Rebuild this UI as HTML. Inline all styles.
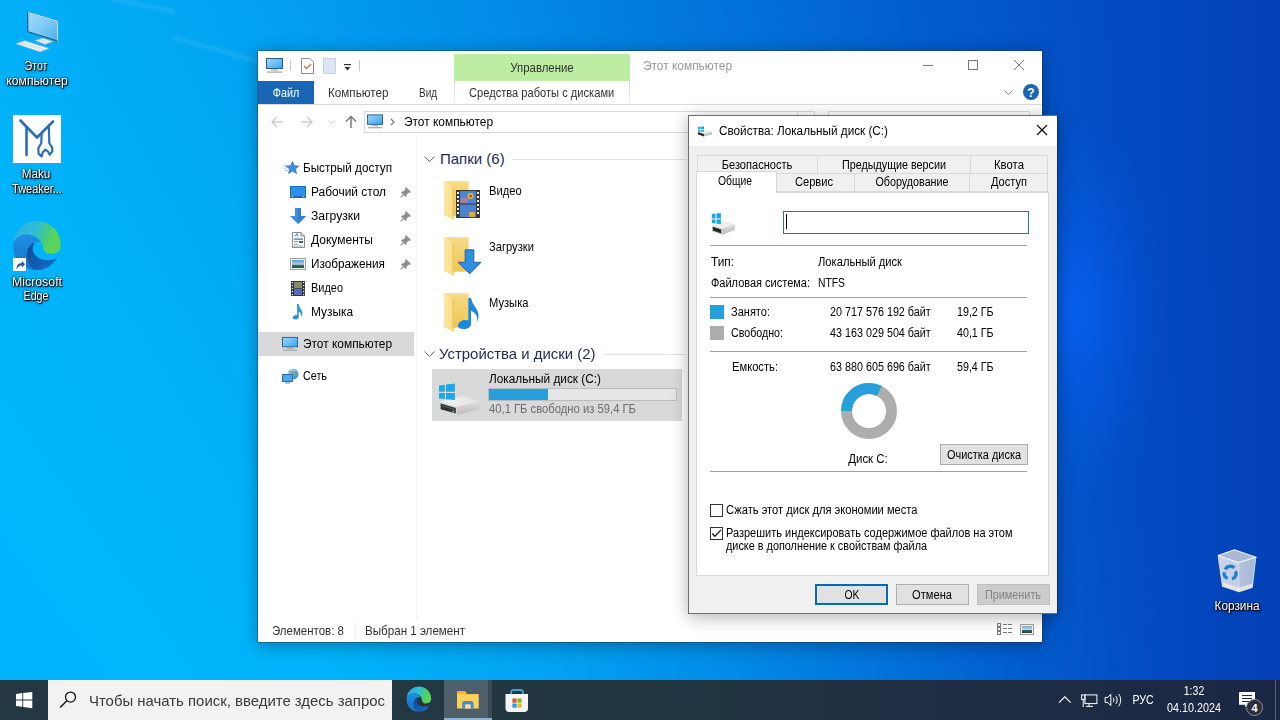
<!DOCTYPE html>
<html><head><meta charset="utf-8"><style>
*{box-sizing:border-box;margin:0;padding:0}
html,body{width:1280px;height:720px;overflow:hidden}
body{position:relative;font-family:"Liberation Sans",sans-serif;font-size:12px;color:#000;
background:conic-gradient(from 300deg at 1250px 2200px,#00b2fd 18.82deg,#00b6fd 24.23deg,#01b2f9 29.65deg,#02a3f2 35.07deg,#028ee8 40.49deg,#0275db 45.91deg,#025dce 51.32deg,#034ac1 56.74deg,#053eb4 62.16deg)}
.a{position:absolute}
.t{position:absolute;white-space:nowrap;line-height:1;font-family:"Liberation Sans",sans-serif}
.dk{text-shadow:0 1px 2px rgba(0,0,0,.9),0 0 3px rgba(0,0,0,.6)}
svg{overflow:visible}

</style></head><body>
<div class="t" style="left:36px;width:0;display:flex;justify-content:center;top:59.64px;transform:scaleX(0.8878);transform-origin:center top;"><span style="font-size:12px;color:#fff;white-space:nowrap;line-height:1;text-shadow:1px 1px 1px #000,0 0 2px #000,0 1px 3px rgba(0,0,0,.8)">Этот</span></div>
<div class="t" style="left:36.5px;width:0;display:flex;justify-content:center;top:74.64px;transform:scaleX(1.0130);transform-origin:center top;"><span style="font-size:12px;color:#fff;white-space:nowrap;line-height:1;text-shadow:1px 1px 1px #000,0 0 2px #000,0 1px 3px rgba(0,0,0,.8)">компьютер</span></div>
<div class="t" style="left:36px;width:0;display:flex;justify-content:center;top:167.84px;transform:scaleX(0.9747);transform-origin:center top;"><span style="font-size:12px;color:#fff;white-space:nowrap;line-height:1;text-shadow:1px 1px 1px #000,0 0 2px #000,0 1px 3px rgba(0,0,0,.8)">Maku</span></div>
<div class="t" style="left:36.7px;width:0;display:flex;justify-content:center;top:182.74px;transform:scaleX(0.9104);transform-origin:center top;"><span style="font-size:12px;color:#fff;white-space:nowrap;line-height:1;text-shadow:1px 1px 1px #000,0 0 2px #000,0 1px 3px rgba(0,0,0,.8)">Tweaker...</span></div>
<div class="t" style="left:36.8px;width:0;display:flex;justify-content:center;top:275.59px;transform:scaleX(1.0270);transform-origin:center top;"><span style="font-size:12px;color:#fff;white-space:nowrap;line-height:1;text-shadow:1px 1px 1px #000,0 0 2px #000,0 1px 3px rgba(0,0,0,.8)">Microsoft</span></div>
<div class="t" style="left:36.4px;width:0;display:flex;justify-content:center;top:290.49px;transform:scaleX(0.8919);transform-origin:center top;"><span style="font-size:12px;color:#fff;white-space:nowrap;line-height:1;text-shadow:1px 1px 1px #000,0 0 2px #000,0 1px 3px rgba(0,0,0,.8)">Edge</span></div>
<div class="t" style="left:1237px;width:0;display:flex;justify-content:center;top:599.84px;transform:scaleX(0.9843);transform-origin:center top;"><span style="font-size:12px;color:#fff;white-space:nowrap;line-height:1;text-shadow:1px 1px 1px #000,0 0 2px #000,0 1px 3px rgba(0,0,0,.8)">Корзина</span></div>
<div class="a" style="left:900px;top:60px;width:380px;height:560px;background:radial-gradient(ellipse 95px 190px at 172px 250px,rgba(10,100,255,.72),rgba(8,98,255,.32) 45%,rgba(8,98,255,0) 100%)"></div>
<svg class="a" style="left:0px;top:0px;" width="300" height="80" viewBox="0 0 300 80"><defs><filter id="sb" x="-20%" y="-50%" width="140%" height="200%"><feGaussianBlur stdDeviation="1.5"/></filter></defs><g stroke="#ffffff" stroke-opacity=".09" stroke-width="4" fill="none" filter="url(#sb)"><line x1="110" y1="-2" x2="175" y2="12"/><line x1="172" y1="37" x2="257" y2="61"/></g></svg>
<div class="a" style="left:0px;top:680px;width:1280px;height:40px;background:linear-gradient(90deg,#243843 0px,#233743 600px,#223542 700px,#213242 800px,#1f2d45 1000px,#1c2944 1160px,#1b2744 1280px)"></div>
<div class="a" style="left:48px;top:680px;width:344px;height:40px;background:#f2f2f2"></div>
<span class="t" id="t7" style="left:89px;top:693.30px;font-size:15px;color:#3a3a3a;transform:scaleX(0.9947);transform-origin:left top;">Чтобы начать поиск, введите здесь запрос</span>
<div class="a" style="left:444px;top:680px;width:48px;height:40px;background:linear-gradient(#4c5f6d,#505d66)"></div>
<div class="a" style="left:488px;top:680px;width:4px;height:40px;background:#3c4852"></div>
<div class="a" style="left:444px;top:718px;width:48px;height:2px;background:#8ab6de"></div>
<div class="t" style="left:1143px;width:0;display:flex;justify-content:center;top:693.84px;transform:scaleX(0.8822);transform-origin:center top;"><span style="font-size:12px;color:#fff;white-space:nowrap;line-height:1;">РУС</span></div>
<div class="t" style="left:1193.7px;width:0;display:flex;justify-content:center;top:684.59px;transform:scaleX(0.8776);transform-origin:center top;"><span style="font-size:12px;color:#fff;white-space:nowrap;line-height:1;">1:32</span></div>
<div class="t" style="left:1194px;width:0;display:flex;justify-content:center;top:702.44px;transform:scaleX(0.8991);transform-origin:center top;"><span style="font-size:12px;color:#fff;white-space:nowrap;line-height:1;">04.10.2024</span></div>
<div class="a" style="left:1275px;top:680px;width:1px;height:40px;background:#5a6270"></div>
<div class="a" style="left:257px;top:50px;width:786px;height:593px;background:#fff;background-clip:padding-box;border:1px solid rgba(40,50,60,.4);box-shadow:0 3px 16px rgba(0,0,0,.3)"></div>
<span class="t" id="t11" style="left:643px;top:59.74px;font-size:12px;color:#999;transform:scaleX(0.9918);transform-origin:left top;">Этот компьютер</span>
<div class="a" style="left:290px;top:60px;width:1px;height:11px;background:#c8c8c8"></div>
<div class="a" style="left:359px;top:60px;width:1px;height:11px;background:#c8c8c8"></div>
<div class="a" style="left:454px;top:54px;width:176px;height:27px;background:#bdeda2"></div>
<div class="t" style="left:542px;width:0;display:flex;justify-content:center;top:62.04px;transform:scaleX(0.9503);transform-origin:center top;"><span style="font-size:12px;color:#333;white-space:nowrap;line-height:1;">Управление</span></div>
<div class="a" style="left:258px;top:81px;width:56px;height:23px;background:#1a66b4"></div>
<div class="t" style="left:286px;width:0;display:flex;justify-content:center;top:86.84px;transform:scaleX(0.8978);transform-origin:center top;"><span style="font-size:12px;color:#fff;white-space:nowrap;line-height:1;">Файл</span></div>
<span class="t" id="t14" style="left:328px;top:86.84px;font-size:12px;color:#333;transform:scaleX(0.9725);transform-origin:left top;">Компьютер</span>
<span class="t" id="t15" style="left:419px;top:86.84px;font-size:12px;color:#333;transform:scaleX(0.8288);transform-origin:left top;">Вид</span>
<div class="a" style="left:454px;top:81px;width:1px;height:23px;background:linear-gradient(#d6d6d6,#f4f4f4)"></div>
<div class="a" style="left:629px;top:81px;width:1px;height:23px;background:linear-gradient(#d6d6d6,#f4f4f4)"></div>
<span class="t" id="t16" style="left:469px;top:86.84px;font-size:12px;color:#333;transform:scaleX(0.9265);transform-origin:left top;">Средства работы с дисками</span>
<div class="a" style="left:258px;top:104px;width:784px;height:1px;background:#dadbdc"></div>
<div class="a" style="left:364px;top:111px;width:434px;height:22px;border:1px solid #d9d9d9;background:#fff"></div>
<div class="a" style="left:798px;top:111px;width:17px;height:22px;border:1px solid #d9d9d9;border-left:none"></div>
<div class="a" style="left:828px;top:111px;width:202px;height:22px;border:1px solid #d9d9d9"></div>
<span class="t" id="t17" style="left:404px;top:115.84px;font-size:12px;color:#000;transform:scaleX(0.9918);transform-origin:left top;">Этот компьютер</span>
<div class="a" style="left:416px;top:134px;width:1px;height:486px;background:#f2f2f2"></div>
<span class="t" id="t18" style="left:303.4px;top:161.84px;font-size:12px;color:#000;transform:scaleX(0.9765);transform-origin:left top;">Быстрый доступ</span>
<span class="t" id="t19" style="left:311px;top:185.84px;font-size:12px;color:#000;transform:scaleX(0.9956);transform-origin:left top;">Рабочий стол</span>
<span class="t" id="t20" style="left:311px;top:209.84px;font-size:12px;color:#000;transform:scaleX(1.0146);transform-origin:left top;">Загрузки</span>
<span class="t" id="t21" style="left:311px;top:233.84px;font-size:12px;color:#000;transform:scaleX(1.0023);transform-origin:left top;">Документы</span>
<span class="t" id="t22" style="left:311px;top:257.84px;font-size:12px;color:#000;transform:scaleX(0.9811);transform-origin:left top;">Изображения</span>
<span class="t" id="t23" style="left:311px;top:281.84px;font-size:12px;color:#000;transform:scaleX(0.9127);transform-origin:left top;">Видео</span>
<span class="t" id="t24" style="left:311px;top:305.84px;font-size:12px;color:#000;transform:scaleX(0.9893);transform-origin:left top;">Музыка</span>
<div class="a" style="left:258px;top:332px;width:156px;height:24px;background:#d9d9d9"></div>
<span class="t" id="t25" style="left:303.4px;top:337.84px;font-size:12px;color:#000;transform:scaleX(0.9918);transform-origin:left top;">Этот компьютер</span>
<span class="t" id="t26" style="left:303.4px;top:369.84px;font-size:12px;color:#000;transform:scaleX(0.8988);transform-origin:left top;">Сеть</span>
<span class="t" id="t27" style="left:440px;top:151.00px;font-size:15px;color:#1f2a55;">Папки (6)</span>
<div class="a" style="left:512px;top:159px;width:174px;height:1px;background:#e2e2e2"></div>
<span class="t" id="t28" style="left:489.4px;top:185.14px;font-size:12px;color:#000;transform:scaleX(0.9300);transform-origin:left top;">Видео</span>
<span class="t" id="t29" style="left:489.4px;top:241.14px;font-size:12px;color:#000;transform:scaleX(0.9300);transform-origin:left top;">Загрузки</span>
<span class="t" id="t30" style="left:489.4px;top:297.14px;font-size:12px;color:#000;transform:scaleX(0.9300);transform-origin:left top;">Музыка</span>
<span class="t" id="t31" style="left:439px;top:346.10px;font-size:15px;color:#1f2a55;transform:scaleX(0.9951);transform-origin:left top;">Устройства и диски (2)</span>
<div class="a" style="left:603px;top:354px;width:83px;height:1px;background:#e2e2e2"></div>
<svg class="a" style="left:424px;top:156px;" width="11" height="6" viewBox="0 0 11 6"><polyline points="0.5,0.5 5.5,5.5 10.5,0.5" fill="none" stroke="#666" stroke-width="1"/></svg>
<svg class="a" style="left:424px;top:351px;" width="11" height="6" viewBox="0 0 11 6"><polyline points="0.5,0.5 5.5,5.5 10.5,0.5" fill="none" stroke="#666" stroke-width="1"/></svg>
<div class="a" style="left:432px;top:369px;width:250px;height:52px;background:#d9d9d9"></div>
<span class="t" id="t32" style="left:489px;top:372.64px;font-size:12px;color:#000;transform:scaleX(0.9862);transform-origin:left top;">Локальный диск (C:)</span>
<div class="a" style="left:488px;top:388px;width:189px;height:13px;background:#e6e6e6;border:1px solid #bcbcbc"></div>
<div class="a" style="left:489px;top:389px;width:59px;height:11px;background:#26a0da"></div>
<span class="t" id="t33" style="left:489px;top:403.24px;font-size:12px;color:#6d6d6d;transform:scaleX(0.9372);transform-origin:left top;">40,1 ГБ свободно из 59,4 ГБ</span>
<span class="t" id="t34" style="left:272.2px;top:624.84px;font-size:12px;color:#333;transform:scaleX(0.9572);transform-origin:left top;">Элементов: 8</span>
<div class="a" style="left:355px;top:622px;width:1px;height:18px;background:#f0f0f0"></div>
<span class="t" id="t35" style="left:365px;top:624.84px;font-size:12px;color:#333;transform:scaleX(0.9671);transform-origin:left top;">Выбран 1 элемент</span>
<div class="a" style="left:688px;top:115px;width:370px;height:499px;background:#f0f0f0;background-clip:padding-box;border:1px solid #6f6f6f;border-right-color:rgba(10,30,70,.5);box-shadow:0 3px 16px rgba(0,0,0,.3)"></div>
<div class="a" style="left:689px;top:116px;width:368px;height:30px;background:#fff"></div>
<span class="t" id="t36" style="left:718.75px;top:124.84px;font-size:12px;color:#000;transform:scaleX(0.9773);transform-origin:left top;">Свойства: Локальный диск (C:)</span>
<div class="a" style="left:696px;top:192px;width:353px;height:384px;background:#fff;border:1px solid #d9d9d9"></div>
<div class="a" style="left:697px;top:155px;width:121px;height:19px;background:#f0f0f0;border:1px solid #d9d9d9;"></div>
<div class="a" style="left:817px;top:155px;width:154px;height:19px;background:#f0f0f0;border:1px solid #d9d9d9;"></div>
<div class="a" style="left:970px;top:155px;width:78px;height:19px;background:#f0f0f0;border:1px solid #d9d9d9;"></div>
<div class="a" style="left:776px;top:173px;width:79px;height:19px;background:#f0f0f0;border:1px solid #d9d9d9;"></div>
<div class="a" style="left:854px;top:173px;width:116px;height:19px;background:#f0f0f0;border:1px solid #d9d9d9;"></div>
<div class="a" style="left:969px;top:173px;width:79px;height:19px;background:#f0f0f0;border:1px solid #d9d9d9;"></div>
<div class="a" style="left:696px;top:171px;width:81px;height:22px;background:#fff;border:1px solid #d9d9d9;border-bottom:none"></div>
<div class="t" style="left:757px;width:0;display:flex;justify-content:center;top:158.59px;transform:scaleX(0.9210);transform-origin:center top;"><span style="font-size:12px;color:#000;white-space:nowrap;line-height:1;">Безопасность</span></div>
<div class="t" style="left:894px;width:0;display:flex;justify-content:center;top:158.59px;transform:scaleX(0.8972);transform-origin:center top;"><span style="font-size:12px;color:#000;white-space:nowrap;line-height:1;">Предыдущие версии</span></div>
<div class="t" style="left:1009px;width:0;display:flex;justify-content:center;top:158.59px;transform:scaleX(0.9467);transform-origin:center top;"><span style="font-size:12px;color:#000;white-space:nowrap;line-height:1;">Квота</span></div>
<div class="t" style="left:735px;width:0;display:flex;justify-content:center;top:174.84px;transform:scaleX(0.8614);transform-origin:center top;"><span style="font-size:12px;color:#000;white-space:nowrap;line-height:1;">Общие</span></div>
<div class="t" style="left:814px;width:0;display:flex;justify-content:center;top:176.34px;transform:scaleX(0.9247);transform-origin:center top;"><span style="font-size:12px;color:#000;white-space:nowrap;line-height:1;">Сервис</span></div>
<div class="t" style="left:911.5px;width:0;display:flex;justify-content:center;top:176.34px;transform:scaleX(0.8943);transform-origin:center top;"><span style="font-size:12px;color:#000;white-space:nowrap;line-height:1;">Оборудование</span></div>
<div class="t" style="left:1008.5px;width:0;display:flex;justify-content:center;top:176.34px;transform:scaleX(0.9212);transform-origin:center top;"><span style="font-size:12px;color:#000;white-space:nowrap;line-height:1;">Доступ</span></div>
<div class="a" style="left:783px;top:211px;width:246px;height:23px;border:1px solid #2b7590;background:#fff"></div>
<div class="a" style="left:786px;top:214px;width:1px;height:15px;background:#000"></div>
<div class="a" style="left:710px;top:245px;width:317px;height:1px;background:#a0a0a0"></div>
<span class="t" id="t44" style="left:711px;top:255.64px;font-size:12px;color:#000;transform:scaleX(0.9853);transform-origin:left top;">Тип:</span>
<span class="t" id="t45" style="left:818px;top:255.64px;font-size:12px;color:#000;transform:scaleX(0.9309);transform-origin:left top;">Локальный диск</span>
<span class="t" id="t46" style="left:711px;top:276.54px;font-size:12px;color:#000;transform:scaleX(0.9161);transform-origin:left top;">Файловая система:</span>
<span class="t" id="t47" style="left:818px;top:276.54px;font-size:12px;color:#000;transform:scaleX(0.8614);transform-origin:left top;">NTFS</span>
<div class="a" style="left:710px;top:297px;width:317px;height:1px;background:#a0a0a0"></div>
<div class="a" style="left:710px;top:305px;width:14px;height:14px;background:#26a0da"></div>
<div class="a" style="left:710px;top:326px;width:14px;height:14px;background:#adadad"></div>
<span class="t" id="t48" style="left:731px;top:305.84px;font-size:12px;color:#000;transform:scaleX(0.9193);transform-origin:left top;">Занято:</span>
<span class="t" id="t49" style="left:731px;top:326.84px;font-size:12px;color:#000;transform:scaleX(0.8889);transform-origin:left top;">Свободно:</span>
<span class="t" id="t50" style="left:830px;top:305.84px;font-size:12px;color:#000;transform:scaleX(0.8974);transform-origin:left top;">20 717 576 192 байт</span>
<span class="t" id="t51" style="left:830px;top:326.84px;font-size:12px;color:#000;transform:scaleX(0.8974);transform-origin:left top;">43 163 029 504 байт</span>
<span class="t" id="t52" style="left:957px;top:305.84px;font-size:12px;color:#000;transform:scaleX(0.8913);transform-origin:left top;">19,2 ГБ</span>
<span class="t" id="t53" style="left:957px;top:326.84px;font-size:12px;color:#000;transform:scaleX(0.8913);transform-origin:left top;">40,1 ГБ</span>
<div class="a" style="left:710px;top:351px;width:317px;height:1px;background:#a0a0a0"></div>
<span class="t" id="t54" style="left:731.5px;top:360.84px;font-size:12px;color:#000;transform:scaleX(0.9311);transform-origin:left top;">Емкость:</span>
<span class="t" id="t55" style="left:830px;top:360.84px;font-size:12px;color:#000;transform:scaleX(0.8974);transform-origin:left top;">63 880 605 696 байт</span>
<span class="t" id="t56" style="left:957px;top:360.84px;font-size:12px;color:#000;transform:scaleX(0.8913);transform-origin:left top;">59,4 ГБ</span>
<div class="t" style="left:867.8px;width:0;display:flex;justify-content:center;top:453.44px;transform:scaleX(0.9560);transform-origin:center top;"><span style="font-size:12px;color:#000;white-space:nowrap;line-height:1;">Диск C:</span></div>
<div class="a" style="left:940px;top:444px;width:88px;height:21px;background:#e1e1e1;border:1px solid #adadad"></div>
<div class="t" style="left:983.5px;width:0;display:flex;justify-content:center;top:448.84px;transform:scaleX(0.9113);transform-origin:center top;"><span style="font-size:12px;color:#000;white-space:nowrap;line-height:1;">Очистка диска</span></div>
<div class="a" style="left:710px;top:471px;width:317px;height:1px;background:#a0a0a0"></div>
<div class="a" style="left:710px;top:504px;width:13px;height:13px;background:#fff;border:1px solid #333"></div>
<div class="a" style="left:710px;top:527px;width:13px;height:13px;background:#fff;border:1px solid #333"></div>
<span class="t" id="t59" style="left:726px;top:504.34px;font-size:12px;color:#000;transform:scaleX(0.9275);transform-origin:left top;">Сжать этот диск для экономии места</span>
<span class="t" id="t60" style="left:726px;top:527.34px;font-size:12px;color:#000;transform:scaleX(0.9163);transform-origin:left top;">Разрешить индексировать содержимое файлов на этом</span>
<span class="t" id="t61" style="left:726px;top:539.84px;font-size:12px;color:#000;transform:scaleX(0.9048);transform-origin:left top;">диске в дополнение к свойствам файла</span>
<div class="a" style="left:815px;top:584px;width:73px;height:21px;background:#e1e1e1;border:2px solid #1565a8;box-shadow:inset 0 0 0 1px #cfe8f8"></div>
<div class="t" style="left:851.5px;width:0;display:flex;justify-content:center;top:589.34px;transform:scaleX(0.8649);transform-origin:center top;"><span style="font-size:12px;color:#000;white-space:nowrap;line-height:1;">OK</span></div>
<div class="a" style="left:896px;top:584px;width:73px;height:21px;background:#e1e1e1;border:1px solid #adadad"></div>
<div class="t" style="left:932px;width:0;display:flex;justify-content:center;top:589.34px;transform:scaleX(0.9289);transform-origin:center top;"><span style="font-size:12px;color:#000;white-space:nowrap;line-height:1;">Отмена</span></div>
<div class="a" style="left:977px;top:584px;width:73px;height:21px;background:#cccccc;border:1px solid #bfbfbf"></div>
<div class="t" style="left:1013px;width:0;display:flex;justify-content:center;top:589.34px;transform:scaleX(0.9030);transform-origin:center top;"><span style="font-size:12px;color:#838383;white-space:nowrap;line-height:1;">Применить</span></div>
<svg class="a" style="left:444px;top:181px;" width="26" height="40" viewBox="0 0 26 40">
<defs><linearGradient id="fb" x1="0" y1="0" x2="0" y2="1"><stop offset="0" stop-color="#f7da86"/><stop offset="1" stop-color="#f0c650"/></linearGradient>
<linearGradient id="ff" x1="0" y1="0" x2="1" y2="0"><stop offset="0" stop-color="#fde9a8"/><stop offset="1" stop-color="#f9dc83"/></linearGradient></defs>
<rect x="0" y="0" width="24.6" height="34.7" fill="url(#fb)"/>
<rect x="0" y="0" width="24.6" height="1.2" fill="#f9e3a4"/>
<polygon points="0,0 8.7,5.3 8.7,39 0,33.8" fill="url(#ff)"/>
<polygon points="8.7,5.3 9.7,5.8 9.7,38.5 8.7,39" fill="#e9c261"/>
</svg>
<svg class="a" style="left:444px;top:237px;" width="26" height="40" viewBox="0 0 26 40">
<defs><linearGradient id="fb" x1="0" y1="0" x2="0" y2="1"><stop offset="0" stop-color="#f7da86"/><stop offset="1" stop-color="#f0c650"/></linearGradient>
<linearGradient id="ff" x1="0" y1="0" x2="1" y2="0"><stop offset="0" stop-color="#fde9a8"/><stop offset="1" stop-color="#f9dc83"/></linearGradient></defs>
<rect x="0" y="0" width="24.6" height="34.7" fill="url(#fb)"/>
<rect x="0" y="0" width="24.6" height="1.2" fill="#f9e3a4"/>
<polygon points="0,0 8.7,5.3 8.7,39 0,33.8" fill="url(#ff)"/>
<polygon points="8.7,5.3 9.7,5.8 9.7,38.5 8.7,39" fill="#e9c261"/>
</svg>
<svg class="a" style="left:444px;top:293px;" width="26" height="40" viewBox="0 0 26 40">
<defs><linearGradient id="fb" x1="0" y1="0" x2="0" y2="1"><stop offset="0" stop-color="#f7da86"/><stop offset="1" stop-color="#f0c650"/></linearGradient>
<linearGradient id="ff" x1="0" y1="0" x2="1" y2="0"><stop offset="0" stop-color="#fde9a8"/><stop offset="1" stop-color="#f9dc83"/></linearGradient></defs>
<rect x="0" y="0" width="24.6" height="34.7" fill="url(#fb)"/>
<rect x="0" y="0" width="24.6" height="1.2" fill="#f9e3a4"/>
<polygon points="0,0 8.7,5.3 8.7,39 0,33.8" fill="url(#ff)"/>
<polygon points="8.7,5.3 9.7,5.8 9.7,38.5 8.7,39" fill="#e9c261"/>
</svg>
<svg class="a" style="left:456px;top:190px;" width="24" height="28" viewBox="0 0 24 28">
<rect x="0" y="0" width="24" height="28" fill="#3a3a32"/>
<rect x="4" y="1" width="16" height="12.5" fill="#4d84d8"/>
<rect x="4" y="14.5" width="16" height="12.5" fill="#4a80d6"/>
<rect x="5" y="8" width="7" height="5" fill="#c77a8a" opacity=".8"/>
<circle cx="14.5" cy="6" r="3" fill="#e0c030"/>
<circle cx="14.5" cy="6" r="1.6" fill="#d84a2a"/>
<rect x="13" y="22" width="6" height="5" fill="#d8b030"/>
<g fill="#f2f2f2">
<rect x="1" y="2" width="2" height="2"/><rect x="1" y="6" width="2" height="2"/><rect x="1" y="10" width="2" height="2"/><rect x="1" y="14" width="2" height="2"/><rect x="1" y="18" width="2" height="2"/><rect x="1" y="22" width="2" height="2"/>
<rect x="21" y="2" width="2" height="2"/><rect x="21" y="6" width="2" height="2"/><rect x="21" y="10" width="2" height="2"/><rect x="21" y="14" width="2" height="2"/><rect x="21" y="18" width="2" height="2"/><rect x="21" y="22" width="2" height="2"/>
</g></svg>
<svg class="a" style="left:457px;top:249px;" width="25" height="26" viewBox="0 0 25 26"><polygon points="8.2,0.8 16.8,0.8 16.8,13.3 24,13.3 12.7,24.8 1,13.3 8.2,13.3" fill="#2f8de2" stroke="#1f5fae" stroke-width="1"/></svg>
<svg class="a" style="left:456px;top:297px;" width="24" height="32" viewBox="0 0 24 32">
<path d="M12.3,1 L15,1 C15.5,5 18,8 20.5,12 C23,16 23,20 21.5,24 L20.8,23.6 C21.6,20 20.5,16.5 15,13.5 L15,27 C15,30 11.5,32 8,32 C4,32 1.5,30.5 2,28 C2.5,25 6,23 9.5,23 C10.5,23 11.5,23.2 12.3,23.6 Z" fill="#1a88e0"/></svg>
<svg class="a" style="left:436px;top:380px;" width="48.0" height="40.0" preserveAspectRatio="none" viewBox="0 0 48 40">
<defs><linearGradient id="dtop" x1="0" y1="0" x2="1" y2="0"><stop offset="0" stop-color="#f4f4f4"/><stop offset="1" stop-color="#e2e2e2"/></linearGradient>
<linearGradient id="dside" x1="0" y1="0" x2="0" y2="1"><stop offset="0" stop-color="#dedede"/><stop offset="1" stop-color="#bdbdbd"/></linearGradient></defs>
<polygon points="3.3,21.8 26.9,16.2 44.6,21.2 20.8,26.9" fill="url(#dtop)"/>
<polygon points="20.8,26.9 44.6,21.2 44.6,29 20.8,35.2" fill="url(#dside)"/>
<polygon points="3.3,21.8 20.8,26.9 20.8,35.2 3.3,30.5" fill="#d8d8d8"/>
<polygon points="4.6,23.6 19.8,28.1 19.8,33.6 4.6,29.2" fill="#303233"/>
<polygon points="6,25 18.5,28.8 18.5,30 6,26.3" fill="#555a5c"/>
<circle cx="17.4" cy="31.4" r="1" fill="#5fd08a"/>
<g fill="#19a9e6">
<polygon points="3,5.6 8.9,4.8 8.9,11.7 3,11.7"/>
<polygon points="10,4.6 18.9,3.6 18.9,11.7 10,11.7"/>
<polygon points="3,13 8.9,13 8.9,19 3,18.4"/>
<polygon points="10,13 18.9,13 18.9,20 10,19.2"/>
</g></svg>
<svg class="a" style="left:284px;top:161px;" width="15" height="14" viewBox="0 0 15 14">
<polygon points="8.5,0.5 10.3,4.8 14.8,5.1 11.4,8 12.5,12.5 8.5,10 4.6,12.5 5.6,8 2.2,5.1 6.7,4.8" fill="#3a8fe6" stroke="#2466b8" stroke-width=".7"/>
<g stroke="#8cc0f0" stroke-width="1"><line x1="0" y1="7" x2="3" y2="7"/><line x1="1" y1="9.5" x2="4" y2="9.5"/><line x1="0.5" y1="4.5" x2="3" y2="4.5"/></g></svg>
<svg class="a" style="left:290px;top:186px;" width="16" height="12" viewBox="0 0 16 12"><rect x="0.5" y="0.5" width="15" height="11" fill="#2f90ea" stroke="#1c6bc2"/><g fill="#fff"><rect x="2" y="10" width="1" height="1"/><rect x="13" y="10" width="1" height="1"/></g><rect x="4" y="10" width="8" height="1" fill="#1c6bc2"/></svg>
<svg class="a" style="left:290px;top:208px;" width="16" height="16" viewBox="0 0 16 16"><polygon points="5,0 11,0 11,8 16,8 8,16 0,8 5,8" fill="#3b8fe2"/><polygon points="8,0 11,0 11,8 16,8 8,16" fill="#2f7fd6"/></svg>
<svg class="a" style="left:292px;top:232px;" width="13" height="16" viewBox="0 0 13 16"><path d="M0.5,0.5 H9 L12.5,4 V15.5 H0.5 Z" fill="#fff" stroke="#8c8c8c"/><path d="M9,0.5 V4 H12.5" fill="none" stroke="#8c8c8c"/>
<rect x="2" y="6.5" width="9" height="1.2" fill="#2a7ab8"/><rect x="2" y="9" width="4" height="1" fill="#7a9ab8"/><rect x="7" y="9" width="4" height="2" fill="#3a5a78"/><rect x="2" y="11.5" width="4" height="1" fill="#7a9ab8"/><rect x="2" y="13.5" width="9" height="1" fill="#9aaabb"/><path d="M3,4.5 L5,1.5 L6,4.5" stroke="#2a7ab8" fill="none" stroke-width=".9"/></svg>
<svg class="a" style="left:290px;top:258px;" width="16" height="12" viewBox="0 0 16 12"><defs><linearGradient id="pg" x1="0" y1="0" x2="0" y2="1"><stop offset="0" stop-color="#5a9ad0"/><stop offset=".55" stop-color="#b8d0e0"/><stop offset=".6" stop-color="#3a7068"/><stop offset="1" stop-color="#20504a"/></linearGradient></defs>
<rect x="0.5" y="0.5" width="15" height="11" fill="#f4f4f4" stroke="#a0a0a0"/><rect x="2" y="2" width="12" height="8" fill="url(#pg)"/></svg>
<svg class="a" style="left:291px;top:281px;" width="14" height="15" viewBox="0 0 14 15"><rect x="0" y="0" width="14" height="15" fill="#2e3440"/><rect x="3" y="1" width="8" height="6.2" fill="#8a8a60"/><rect x="3" y="7.8" width="8" height="6.2" fill="#5a6ab8"/>
<g fill="#e8e8e0"><rect x="0.8" y="1" width="1.2" height="1.2"/><rect x="0.8" y="4" width="1.2" height="1.2"/><rect x="0.8" y="7" width="1.2" height="1.2"/><rect x="0.8" y="10" width="1.2" height="1.2"/><rect x="0.8" y="13" width="1.2" height="1.2"/>
<rect x="12" y="1" width="1.2" height="1.2"/><rect x="12" y="4" width="1.2" height="1.2"/><rect x="12" y="7" width="1.2" height="1.2"/><rect x="12" y="10" width="1.2" height="1.2"/><rect x="12" y="13" width="1.2" height="1.2"/></g></svg>
<svg class="a" style="left:290px;top:303.5px;" width="13.5" height="15.5" viewBox="0 0 12 14"><path d="M6.3,0 L7.8,0 C8,2.5 9.5,4 10.5,6 C11.5,8 11.2,10 10.5,11.2 L10,11 C10.3,9.5 9.8,8 7.8,6.8 L7.8,12 C7.8,13.2 6.5,14 5,14 C3.2,14 2.2,13.3 2.4,12.2 C2.7,10.8 4.2,10 5.4,10 C5.8,10 6.1,10.1 6.3,10.2 Z" fill="#2a90e0"/></svg>
<svg class="a" style="left:400px;top:186px;" width="12" height="12" viewBox="0 0 12 12"><g fill="#8c8c8c"><polygon points="6,1 11,6 9.6,7 8.6,6.6 6.2,9 6.6,10.2 5.6,11 1,6.4 1.8,5.4 3,5.8 5.4,3.4 5,2.4"/><polygon points="3.2,8 4,8.8 1,11.8 0.2,11"/></g></svg>
<svg class="a" style="left:400px;top:210px;" width="12" height="12" viewBox="0 0 12 12"><g fill="#8c8c8c"><polygon points="6,1 11,6 9.6,7 8.6,6.6 6.2,9 6.6,10.2 5.6,11 1,6.4 1.8,5.4 3,5.8 5.4,3.4 5,2.4"/><polygon points="3.2,8 4,8.8 1,11.8 0.2,11"/></g></svg>
<svg class="a" style="left:400px;top:234px;" width="12" height="12" viewBox="0 0 12 12"><g fill="#8c8c8c"><polygon points="6,1 11,6 9.6,7 8.6,6.6 6.2,9 6.6,10.2 5.6,11 1,6.4 1.8,5.4 3,5.8 5.4,3.4 5,2.4"/><polygon points="3.2,8 4,8.8 1,11.8 0.2,11"/></g></svg>
<svg class="a" style="left:400px;top:258px;" width="12" height="12" viewBox="0 0 12 12"><g fill="#8c8c8c"><polygon points="6,1 11,6 9.6,7 8.6,6.6 6.2,9 6.6,10.2 5.6,11 1,6.4 1.8,5.4 3,5.8 5.4,3.4 5,2.4"/><polygon points="3.2,8 4,8.8 1,11.8 0.2,11"/></g></svg>
<svg class="a" style="left:282px;top:336px;" width="16" height="16" viewBox="0 0 17 15">
<defs><linearGradient id="mg" x1="0" y1="0" x2="1" y2="1"><stop offset="0" stop-color="#9fd8fb"/><stop offset="1" stop-color="#3aa3ee"/></linearGradient></defs>
<rect x="0.5" y="0.5" width="16" height="10" fill="url(#mg)" stroke="#2a5e8c" stroke-width="1"/>
<rect x="5" y="11.5" width="7" height="1" fill="#8a9aa8"/>
<rect x="1" y="13.5" width="15" height="1.2" fill="#9aa5ae"/>
</svg>
<svg class="a" style="left:282px;top:367.5px;" width="17" height="16" viewBox="0 0 17 16"><defs><linearGradient id="gl" x1="0" y1="0" x2="1" y2="1"><stop offset="0" stop-color="#bfe6fb"/><stop offset="1" stop-color="#2f7fc8"/></linearGradient></defs>
<circle cx="11" cy="6" r="5.5" fill="url(#gl)"/><path d="M7,3 C9,5 12,4 15,6 M9,9 C10,7 13,8 14,10" stroke="#5a9a60" stroke-width="1" fill="none"/>
<rect x="0.5" y="6.5" width="10" height="7" fill="#4aa8f0" stroke="#2a6aa8"/><rect x="3" y="14.5" width="5" height="1" fill="#6a8aa8"/></svg>
<svg class="a" style="left:367px;top:114px;" width="16" height="15" viewBox="0 0 17 15">
<defs><linearGradient id="mg" x1="0" y1="0" x2="1" y2="1"><stop offset="0" stop-color="#9fd8fb"/><stop offset="1" stop-color="#3aa3ee"/></linearGradient></defs>
<rect x="0.5" y="0.5" width="16" height="10" fill="url(#mg)" stroke="#2a5e8c" stroke-width="1"/>
<rect x="5" y="11.5" width="7" height="1" fill="#8a9aa8"/>
<rect x="1" y="13.5" width="15" height="1.2" fill="#9aa5ae"/>
</svg>
<svg class="a" style="left:390px;top:118px;" width="5" height="8" viewBox="0 0 5 8"><polyline points="1,1 4,4 1,7" fill="none" stroke="#777" stroke-width="1.2"/></svg>
<svg class="a" style="left:271px;top:116px;" width="13" height="12" viewBox="0 0 13 12"><g fill="none" stroke="#c8c8c8" stroke-width="1.3"><line x1="1" y1="6" x2="12" y2="6"/><polyline points="6,1 1,6 6,11"/></g></svg>
<svg class="a" style="left:300px;top:116px;" width="13" height="12" viewBox="0 0 13 12"><g fill="none" stroke="#c8c8c8" stroke-width="1.3"><line x1="1" y1="6" x2="12" y2="6"/><polyline points="7,1 12,6 7,11"/></g></svg>
<svg class="a" style="left:328px;top:120px;" width="7" height="5" viewBox="0 0 7 5"><polyline points="0.5,0.8 3.5,3.8 6.5,0.8" fill="none" stroke="#c8c8c8" stroke-width="1"/></svg>
<svg class="a" style="left:345px;top:115px;" width="12" height="13" viewBox="0 0 12 13"><g fill="none" stroke="#777" stroke-width="1.5"><line x1="6" y1="1.5" x2="6" y2="13"/><polyline points="1,6.5 6,1.5 11,6.5"/></g></svg>
<svg class="a" style="left:266px;top:58px;" width="17" height="15" viewBox="0 0 17 15">
<defs><linearGradient id="mg" x1="0" y1="0" x2="1" y2="1"><stop offset="0" stop-color="#9fd8fb"/><stop offset="1" stop-color="#3aa3ee"/></linearGradient></defs>
<rect x="0.5" y="0.5" width="16" height="10" fill="url(#mg)" stroke="#2a5e8c" stroke-width="1"/>
<rect x="5" y="11.5" width="7" height="1" fill="#8a9aa8"/>
<rect x="1" y="13.5" width="15" height="1.2" fill="#9aa5ae"/>
</svg>
<svg class="a" style="left:301px;top:58px;" width="13" height="16" viewBox="0 0 13 16"><path d="M0.5,0.5 H9 L12.5,4 V15.5 H0.5 Z" fill="#fff" stroke="#8a8a8a"/><polyline points="3,8 5.5,10.5 10,6" fill="none" stroke="#e07030" stroke-width="1.3"/></svg>
<svg class="a" style="left:323px;top:58px;" width="13" height="16" viewBox="0 0 13 16"><rect x="0.5" y="0.5" width="12" height="15" fill="#dde6f2" stroke="#c6d2e2"/></svg>
<svg class="a" style="left:344px;top:64px;" width="7" height="7" viewBox="0 0 7 7"><rect x="0" y="0" width="7" height="1.2" fill="#333"/><polygon points="0.5,3 6.5,3 3.5,6.5" fill="#333"/></svg>
<div class="a" style="left:923px;top:65px;width:10px;height:1px;background:#777"></div>
<div class="a" style="left:968px;top:60px;width:10px;height:10px;border:1px solid #777"></div>
<svg class="a" style="left:1014px;top:60px;" width="10" height="10" viewBox="0 0 10 10"><g stroke="#777" stroke-width="1"><line x1="0" y1="0" x2="10" y2="10"/><line x1="10" y1="0" x2="0" y2="10"/></g></svg>
<svg class="a" style="left:1004px;top:90px;" width="9" height="5" viewBox="0 0 9 5"><polyline points="0.5,0.5 4.5,4.5 8.5,0.5" fill="none" stroke="#888" stroke-width="1"/></svg>
<svg class="a" style="left:1023px;top:84px;" width="16" height="16" viewBox="0 0 16 16"><circle cx="8" cy="8" r="8" fill="#1a66b4"/><text x="8" y="13" font-family="Liberation Sans" font-weight="bold" font-size="12" fill="#fff" text-anchor="middle">?</text></svg>
<svg class="a" style="left:997px;top:623px;" width="16" height="13" viewBox="0 0 16 13"><g fill="none" stroke="#777" stroke-width="1"><rect x="0.5" y="0.5" width="3" height="3"/><rect x="0.5" y="4.5" width="3" height="3"/><rect x="0.5" y="8.5" width="3" height="3"/></g><g fill="#777"><rect x="6" y="1" width="4" height="1"/><rect x="11" y="1" width="4" height="1"/><rect x="6" y="5" width="4" height="1"/><rect x="11" y="5" width="4" height="1"/><rect x="6" y="9" width="4" height="1"/><rect x="11" y="9" width="4" height="1"/></g></svg>
<svg class="a" style="left:1020px;top:624px;" width="14" height="11" viewBox="0 0 14 11"><defs><linearGradient id="vg" x1="0" y1="0" x2="0" y2="1"><stop offset="0" stop-color="#6aa8d8"/><stop offset=".5" stop-color="#c0d8e8"/><stop offset=".6" stop-color="#3a6a62"/><stop offset="1" stop-color="#20403c"/></linearGradient></defs><rect x="0.5" y="0.5" width="13" height="10" fill="#f4f4f4" stroke="#999"/><rect x="2" y="2" width="10" height="7" fill="url(#vg)"/></svg>
<svg class="a" style="left:694px;top:122px;" width="22" height="18" viewBox="0 0 22 18"><polygon points="4,10 9,7.8 18,10 10,12" fill="#ececec"/><polygon points="10,12 18,10 18,12.5 10,14.5" fill="#c4c4c4"/><polygon points="4,10 10,12 10,14.5 4,12.5" fill="#2a2c30"/>
<g fill="#17a6e2"><rect x="4" y="4.8" width="2.6" height="2.4"/><rect x="7.2" y="4.5" width="2.8" height="2.7"/><rect x="4" y="7.8" width="2.6" height="1.8"/><rect x="7.2" y="7.8" width="2.8" height="1.8"/></g></svg>
<svg class="a" style="left:706px;top:208px;" width="36" height="32" viewBox="0 0 36 32"><defs><linearGradient id="sdr" x1="0" y1="0" x2="0" y2="1"><stop offset="0" stop-color="#dcdcdc"/><stop offset="1" stop-color="#bcbcbc"/></linearGradient></defs>
<polygon points="6,17.5 17,13 29,16.5 16,20.5" fill="#ededed"/><polygon points="16,20.5 29,16.5 29,22 16,26.7" fill="url(#sdr)"/><polygon points="6,17.5 16,20.5 16,26.7 6,23.5" fill="#d6d6d6"/><polygon points="6.8,18.8 15.2,21.4 15.2,25.4 6.8,22.6" fill="#25272a"/>
<g fill="#17a6e2"><polygon points="5.8,6 9.4,5.5 9.4,10.4 5.8,10.4"/><polygon points="10.4,5.4 14.9,5 14.9,10.4 10.4,10.4"/><polygon points="5.8,11.4 9.4,11.4 9.4,15.4 5.8,15"/><polygon points="10.4,11.4 14.9,11.4 14.9,16.2 10.4,15.6"/></g></svg>
<svg class="a" style="left:1037px;top:125px;" width="10" height="10" viewBox="0 0 10 10"><g stroke="#000" stroke-width="1.1"><line x1="0" y1="0" x2="10" y2="10"/><line x1="10" y1="0" x2="0" y2="10"/></g></svg>
<svg class="a" style="left:840.75px;top:382.8px;" width="56" height="56" viewBox="0 0 56 56"><circle cx="28" cy="28" r="22.5" fill="none" stroke="#adadad" stroke-width="11"/><circle cx="28" cy="28" r="22.5" fill="none" stroke="#26a0da" stroke-width="11" stroke-dasharray="45.8 200" transform="rotate(180 28 28)"/></svg>
<svg class="a" style="left:710px;top:527px;" width="13" height="13" viewBox="0 0 13 13"><polyline points="2.2,6.5 4.8,9.3 11,3" fill="none" stroke="#222" stroke-width="1.3"/></svg>
<svg class="a" style="left:15px;top:11px;" width="45" height="43" viewBox="0 0 45 43"><defs><linearGradient id="cm" x1="0" y1="0" x2="1" y2="1"><stop offset="0" stop-color="#a8dcfb"/><stop offset=".5" stop-color="#7ccaf6"/><stop offset="1" stop-color="#4bb0ee"/></linearGradient></defs>
<polygon points="12.8,1.25 42.65,10.3 42.65,30 12.8,20.7" fill="url(#cm)" stroke="#1c4a78" stroke-width="1"/>
<polyline points="12.8,1.25 42.65,10.3 42.65,30" fill="none" stroke="#e8f6ff" stroke-width="1"/>
<polygon points="20,29.5 28,27 38,30.5 30,33.5" fill="#dfe8ee" stroke="#9ab0c0" stroke-width=".6"/>
<polygon points="1,32.8 9.7,29.7 34,37.4 25,40.8" fill="#eef4f8" stroke="#a8bccc" stroke-width=".7"/>
<g stroke="#b8c8d4" stroke-width=".5"><line x1="4" y1="31.8" x2="28" y2="39.5"/><line x1="6.5" y1="31" x2="30.5" y2="38.7"/></g></svg>
<div class="a" style="left:13px;top:115px;width:48px;height:48px;background:#fff"></div>
<svg class="a" style="left:13px;top:115px;" width="48" height="48" viewBox="0 0 48 48"><g fill="none" stroke="#2b6db8" stroke-width="2.6" stroke-linecap="round" stroke-linejoin="round">
<polyline points="7.5,5.5 24,22.5 40,6.5"/><line x1="13.5" y1="12" x2="13.5" y2="40"/></g>
<path d="M28.6,19 L28.3,28 L25.3,33.3 L25.6,38.6 L28.6,41.4 L29.8,37.2 L32.5,34.6 L35.3,37 L36.8,39.6 L39.3,36.4 L39.3,33 L36.3,28 L35.8,11" fill="none" stroke="#2b6db8" stroke-width="2.2" stroke-linejoin="round"/></svg>
<svg class="a" style="left:12px;top:222px;" width="50" height="50" viewBox="0 0 50 50"><defs>
<linearGradient id="eTop" x1="0" y1="0" x2="1" y2="0.3"><stop offset="0" stop-color="#2aaeea"/><stop offset="0.5" stop-color="#30bdd6"/><stop offset="0.75" stop-color="#44cb86"/><stop offset="0.92" stop-color="#58d55a"/></linearGradient>
<linearGradient id="eBody" x1="0" y1="0" x2="0" y2="1"><stop offset="0" stop-color="#1e8ee2"/><stop offset="1" stop-color="#1674c8"/></linearGradient>
<linearGradient id="eWave" x1="0" y1="0" x2="1" y2="0.6"><stop offset="0" stop-color="#0b4c9c"/><stop offset="1" stop-color="#1868c2"/></linearGradient></defs>
<path d="M1.4,20.8 C4.5,15 9,12.3 14,12.3 C19.5,12.3 25,15 28,19.5 L20.1,21.5 C16.5,24 14.6,28.5 14.6,33.3 C14.6,39 17.5,44.5 22.2,47.9 A23.6,23.6 0 0 1 1.4,20.8 Z" fill="url(#eBody)"/>
<path d="M20.6,21.2 C16.5,24 14.6,28.5 14.6,33.3 C14.6,39 17.5,44.5 22.2,47.9 A23.6,23.6 0 0 0 45.1,36.1 C42,37.7 39,38.2 36,38.2 C27,38.2 20.8,33 20.8,27 C20.8,25 21.2,23 22.5,21.2 Z" fill="url(#eWave)"/>
<path d="M1.4,20.8 A23.6,23.6 0 0 1 48.6,24.3 C48.6,28.5 45,31.9 39,31.9 C35.5,31.9 32.6,30.5 31.6,28 C31.2,26 30.8,23.5 29.5,20.5 C26.5,14.5 20,12.3 14,12.3 C9,12.3 4.5,15 1.4,20.8 Z" fill="url(#eTop)"/></svg>
<div class="a" style="left:13px;top:258px;width:13px;height:13px;background:#fff"></div>
<svg class="a" style="left:13px;top:258px;" width="13" height="13" viewBox="0 0 13 13"><path d="M3.5,11.5 C3.5,7 5.5,5 9,5 L9,3 L12,6.2 L9,9.4 L9,7.4 C6.5,7.4 5,8.5 3.5,11.5 Z" fill="#2b5aa8"/></svg>
<svg class="a" style="left:1217px;top:549px;" width="40" height="44" viewBox="0 0 40 44"><defs><linearGradient id="rb" x1="0" y1="0" x2="1" y2="0"><stop offset="0" stop-color="#c9d3e8"/><stop offset=".55" stop-color="#c2cde4"/><stop offset=".56" stop-color="#b4c2dc"/><stop offset="1" stop-color="#a6b6d4"/></linearGradient></defs>
<polygon points="1.1,6.6 21.3,13.6 38.8,8.2 35.3,38.5 22.1,42.8 5.4,37.3" fill="url(#rb)"/>
<polygon points="1.1,6.6 17.4,0.8 38.8,8.2 21.3,13.6" fill="#aab8d6"/>
<polyline points="1.1,6.6 17.4,0.8 38.8,8.2 21.3,13.6 1.1,6.6" fill="none" stroke="#f4f8ff" stroke-width="1.1"/>
<line x1="21.3" y1="13.6" x2="22.1" y2="42.8" stroke="#dde6f6" stroke-width=".8"/>
<polyline points="1.1,6.6 5.4,37.3 22.1,42.8 35.3,38.5 38.8,8.2" fill="none" stroke="#e6eef9" stroke-width=".8"/>
<polygon points="5,33 22,38.5 35.7,34.5 35.3,38.5 22.1,42.8 5.4,37.3" fill="#eceadf" opacity=".85"/>
<g fill="none" stroke="#1b7ed2" stroke-width="3.2"><path d="M8.2,20.5 A5.6,5.6 0 0 1 17.2,18.8"/><path d="M18.6,22.2 A5.6,5.6 0 0 1 15,30"/><path d="M10.6,29.5 A5.6,5.6 0 0 1 7.3,23.3"/></g></svg>
<svg class="a" style="left:15.8px;top:691.8px;" width="16.4" height="16.4" viewBox="0 0 16.4 16.4"><g fill="#fff"><polygon points="0,2 6.3,1.1 6.3,7.4 0,7.4"/><polygon points="7.2,0.9 16.3,0 16.3,7.4 7.2,7.4"/><polygon points="0,8.4 6.3,8.4 6.3,14.8 0,14"/><polygon points="7.2,8.4 16.3,8.4 16.3,16.3 7.2,15.1"/></g></svg>
<svg class="a" style="left:59px;top:691px;" width="19" height="18" viewBox="0 0 19 18"><circle cx="11.5" cy="6.1" r="5" fill="none" stroke="#111" stroke-width="1.3"/><line x1="7.8" y1="9.8" x2="1.2" y2="16.6" stroke="#111" stroke-width="1.4"/></svg>
<svg class="a" style="left:406.2px;top:687.1px;" width="25.85" height="25.85" viewBox="0 0 50 50"><defs>
<linearGradient id="eTop" x1="0" y1="0" x2="1" y2="0.3"><stop offset="0" stop-color="#2aaeea"/><stop offset="0.5" stop-color="#30bdd6"/><stop offset="0.75" stop-color="#44cb86"/><stop offset="0.92" stop-color="#58d55a"/></linearGradient>
<linearGradient id="eBody" x1="0" y1="0" x2="0" y2="1"><stop offset="0" stop-color="#1e8ee2"/><stop offset="1" stop-color="#1674c8"/></linearGradient>
<linearGradient id="eWave" x1="0" y1="0" x2="1" y2="0.6"><stop offset="0" stop-color="#0b4c9c"/><stop offset="1" stop-color="#1868c2"/></linearGradient></defs>
<path d="M1.4,20.8 C4.5,15 9,12.3 14,12.3 C19.5,12.3 25,15 28,19.5 L20.1,21.5 C16.5,24 14.6,28.5 14.6,33.3 C14.6,39 17.5,44.5 22.2,47.9 A23.6,23.6 0 0 1 1.4,20.8 Z" fill="url(#eBody)"/>
<path d="M20.6,21.2 C16.5,24 14.6,28.5 14.6,33.3 C14.6,39 17.5,44.5 22.2,47.9 A23.6,23.6 0 0 0 45.1,36.1 C42,37.7 39,38.2 36,38.2 C27,38.2 20.8,33 20.8,27 C20.8,25 21.2,23 22.5,21.2 Z" fill="url(#eWave)"/>
<path d="M1.4,20.8 A23.6,23.6 0 0 1 48.6,24.3 C48.6,28.5 45,31.9 39,31.9 C35.5,31.9 32.6,30.5 31.6,28 C31.2,26 30.8,23.5 29.5,20.5 C26.5,14.5 20,12.3 14,12.3 C9,12.3 4.5,15 1.4,20.8 Z" fill="url(#eTop)"/></svg>
<svg class="a" style="left:456.9px;top:690.5px;" width="22" height="18" viewBox="0 0 22 18"><path d="M0,1 L8,1 L10,3 L21.7,3 L21.7,17.5 L0,17.5 Z" fill="#f8d25a"/><path d="M0,0 L8,0 L10,2.5 L0,2.5 Z" fill="#e7b23a"/><rect x="0" y="3" width="21.7" height="1" fill="#f3c446"/>
<path d="M5.3,17.5 V12.5 C5.3,11 6.3,10 7.8,10 H14 C15.5,10 16.5,11 16.5,12.5 V17.5 H13.5 V13.5 H8.3 V17.5 Z" fill="#3d8fd0"/><rect x="8.3" y="13.5" width="5.2" height="4" fill="#f6e09a"/></svg>
<svg class="a" style="left:504.7px;top:688.5px;" width="24" height="24" viewBox="0 0 24 24"><path d="M6,6 V3.5 C6,2 7,1 8.5,1 H15.5 C17,1 18,2 18,3.5 V6" fill="none" stroke="#3ea0d6" stroke-width="1.8"/>
<path d="M0.5,5 H23 V19.5 C23,21.5 21.5,23 19.5,23 H4 C2,23 0.5,21.5 0.5,19.5 Z" fill="#f5f5f5"/>
<rect x="7.4" y="9.5" width="4.2" height="4.2" fill="#e0522f"/><rect x="12.4" y="9.5" width="4.2" height="4.2" fill="#7eb91e"/><rect x="7.4" y="14.5" width="4.2" height="4.2" fill="#1ba1e2"/><rect x="12.4" y="14.5" width="4.2" height="4.2" fill="#f5b82e"/></svg>
<svg class="a" style="left:1058px;top:695px;" width="14" height="9" viewBox="0 0 14 9"><polyline points="1,7.7 6.8,1.8 12.7,7.7" fill="none" stroke="#fff" stroke-width="1.1"/></svg>
<svg class="a" style="left:1080px;top:693px;" width="18" height="15" viewBox="0 0 18 15"><g fill="none" stroke="#fff" stroke-width="1"><rect x="4.9" y="1.9" width="12" height="8.7"/><line x1="9" y1="10.6" x2="9" y2="13.4"/><line x1="6" y1="13.4" x2="13" y2="13.4"/><rect x="1.6" y="1.9" width="3.3" height="4.5"/><line x1="3.2" y1="6.4" x2="3.2" y2="14"/></g></svg>
<svg class="a" style="left:1104px;top:693px;" width="19" height="15" viewBox="0 0 19 15"><g fill="none" stroke="#fff" stroke-width="1"><polygon points="1.1,4.4 3.8,4.4 6.8,1.1 6.8,12.7 3.8,9.4 1.1,9.4"/><path d="M9.2,4.8 C10.2,6 10.2,8 9.2,9.2"/><path d="M11.8,3 C13.6,5 13.6,9 11.8,11"/><path d="M14.6,1 C17.3,4 17.3,10 14.6,13.3"/></g></svg>
<svg class="a" style="left:1238px;top:691px;" width="27" height="26" viewBox="0 0 27 26"><path d="M1,1 H17 V13.75 H10 L7,16 V13.75 H1 Z" fill="#fff"/><g fill="#1b2640"><rect x="4" y="4" width="10" height="1"/><rect x="4" y="7" width="10" height="1"/><rect x="4" y="10" width="7" height="1"/></g>
<circle cx="16.5" cy="16.5" r="8" fill="#2b2d38" stroke="#8a90a2" stroke-width="1"/>
<text x="16.5" y="20.6" font-family="Liberation Sans" font-weight="bold" font-size="11" fill="#fff" text-anchor="middle">4</text></svg>
</body></html>
